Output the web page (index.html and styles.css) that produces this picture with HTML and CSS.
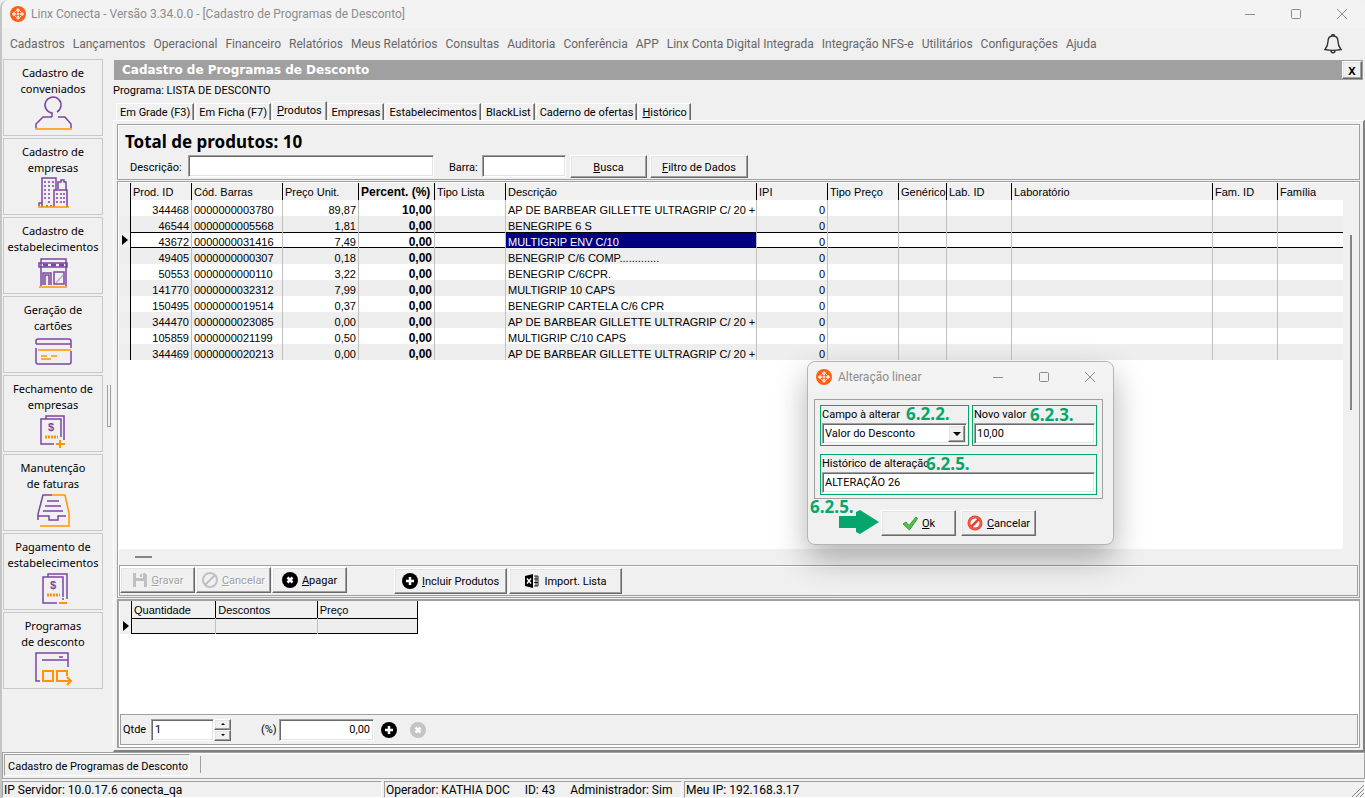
FILE: index.html
```html
<!DOCTYPE html>
<html lang="pt-BR">
<head>
  <meta charset="UTF-8">
  <meta name="viewport" content="width=device-width, initial-scale=1">
  <title>Linx Conecta</title>
  <link rel="stylesheet" href="styles.css">
</head>
<body>

<!-- shared icons -->
<svg class="sprite" aria-hidden="true">
  <symbol id="logo" viewBox="0 0 16 16">
    <circle cx="8" cy="8" r="8" fill="#fb6016"/>
    <g fill="#ffb48c" stroke="#fff" stroke-width="1">
      <circle cx="8" cy="4.3" r="1.3"/><circle cx="8" cy="11.7" r="1.3"/>
      <circle cx="4" cy="8" r="1.3"/><circle cx="12" cy="8" r="1.3"/><circle cx="8" cy="8" r="1"/>
    </g>
    <path d="M5 6l1.200-1M11 6L9.800 5M5 10l1.200 1M11 10l-1.200 1" stroke="#fff" stroke-width="1"/>
  </symbol>
  <symbol id="min" viewBox="0 0 12 12"><path d="M1 6.500h10" stroke="#8c8c8c" fill="none"/></symbol>
  <symbol id="max" viewBox="0 0 12 12"><rect x="1.500" y="1.500" width="9" height="9" rx="1" stroke="#8c8c8c" fill="none"/></symbol>
  <symbol id="close" viewBox="0 0 12 12"><path d="M1 1l10 10M11 1L1 11" stroke="#8c8c8c" fill="none"/></symbol>
  <symbol id="plus" viewBox="0 0 16 16">
    <circle cx="8" cy="8" r="8"/><path d="M8 4v8M4 8h8" stroke="#fff" stroke-width="2.500"/>
  </symbol>
  <symbol id="cross" viewBox="0 0 16 16">
    <circle cx="8" cy="8" r="8"/><path d="M5.500 5.500l5 5M10.500 5.500l-5 5" stroke="#fff" stroke-width="2.500"/>
  </symbol>
</svg>

<header class="titlebar">
  <svg class="logo"><use href="#logo"/></svg>
  <h1>Linx Conecta - Versão 3.34.0.0 - [Cadastro de Programas de Desconto]</h1>
  <div class="window-buttons">
    <button aria-label="Minimizar"><svg><use href="#min"/></svg></button>
    <button aria-label="Maximizar"><svg><use href="#max"/></svg></button>
    <button aria-label="Fechar"><svg><use href="#close"/></svg></button>
  </div>
</header>

<nav class="menubar">
  <a href="#">Cadastros</a>
  <a href="#">Lançamentos</a>
  <a href="#">Operacional</a>
  <a href="#">Financeiro</a>
  <a href="#">Relatórios</a>
  <a href="#">Meus Relatórios</a>
  <a href="#">Consultas</a>
  <a href="#">Auditoria</a>
  <a href="#">Conferência</a>
  <a href="#">APP</a>
  <a href="#">Linx Conta Digital Integrada</a>
  <a href="#">Integração NFS-e</a>
  <a href="#">Utilitários</a>
  <a href="#">Configurações</a>
  <a href="#">Ajuda</a>
  <button class="bell" aria-label="Notificações">
    <svg viewBox="0 0 18 20" fill="none" stroke="#333" stroke-width="1.400">
      <path d="M9 2C5.500 2 4 4.500 4 7.500c0 4-1 5.500-3 8 4 1 12 1 16 0-2-2.500-3-4-3-8C14 4.500 12.500 2 9 2z"/>
      <path d="M7.500 2a1.500 1.500 0 0 1 3 0M7 16.500c0 3 4 3 4 0"/>
    </svg>
  </button>
</nav>

<div class="workspace">
  <aside class="sidebar">
    <button>Cadastro de<br>conveniados
      <svg viewBox="0 0 38 38">
        <path class="p" d="M18 20v-4a8 8 0 1 1 5-1M18 20H9L2 27v4M24 20h7L37 27v4"/>
        <path class="o" d="M1 32h37"/>
      </svg>
    </button>
    <button>Cadastro de<br>empresas
      <svg viewBox="0 0 38 38">
        <path class="p" d="M8 31V2h14v12M24 13V6h3V4h3v2h2v8M20 31V14h13v17M5 30v-3h3"/>
        <path class="p dots" d="M11 5v20M15 5v24M19 5v8M23 17v11M27 17v11M30 17v11M12 30h6"/>
        <path class="o" d="M4 31h31"/>
      </svg>
    </button>
    <button>Cadastro de<br>estabelecimentos
      <svg viewBox="0 0 38 38">
        <path class="p" d="M7 31V4h25v27M5 8h28v4H5zM9 30V18h8v12M11 30V20h4v10M20 17h10v12H20z"/>
        <path class="p" d="M9 10h5M17 10h5M25 10h5" stroke-width="3"/>
        <path class="p" d="M22 28l7-8" stroke-opacity=".4"/>
        <path class="o" d="M5 32h28"/>
      </svg>
    </button>
    <button>Geração de<br>cartões
      <svg viewBox="0 0 38 38">
        <path class="p" d="M2 10V7q0-2 2-2h31q2 0 2 2v7M2 10h35M2 14v14q0 2 2 2h31q2 0 2-2V17"/>
        <path class="o" d="M4 16h33M7 22h6M17 22h6M7 25h10"/>
      </svg>
    </button>
    <button>Fechamento de<br>empresas
      <svg viewBox="0 0 38 38">
        <path class="p" d="M20 31H7V6h20v18M12 6V3h18v24"/>
        <text x="14" y="18">$</text>
        <path class="o bars" d="M11 24h13"/>
        <path class="o thick" d="M22 31h9M26 27v8"/>
      </svg>
    </button>
    <button>Manutenção<br>de faturas
      <svg viewBox="0 0 38 38">
        <path class="p" d="M4 28v-6L9 3h9M13 9h12M11 14h16M9 19h20M4 24h11v4h9v-4h8"/>
        <path class="o" d="M18 3h13l4 18v13H6"/>
      </svg>
    </button>
    <button>Pagamento de<br>estabelecimentos
      <svg viewBox="0 0 38 38">
        <path class="p" d="M23 32H9V6h20v20M14 6V3h19v25M29 27v2"/>
        <text x="16" y="18">$</text>
        <path class="o bars" d="M13 24h13"/>
        <path class="o thick" d="M25 32h8"/>
      </svg>
    </button>
    <button>Programas<br>de desconto
      <svg viewBox="0 0 38 38">
        <path class="p" d="M6 31H2V3h32v14M8 10h26M25 7h4"/>
        <path class="o thick" d="M9 21h10v10H9zM28 31h-5V21h10v5M28 31h9M33 27l4 4-4 4"/>
      </svg>
    </button>
  </aside>
  <div class="splitter"></div>

  <main class="main">
    <div class="mdi-title">
      <h2>Cadastro de Programas de Desconto</h2>
      <button class="btn" aria-label="Fechar tela">X</button>
    </div>
    <p class="program">Programa: LISTA DE DESCONTO</p>

    <div class="tabs" role="tablist">
      <button role="tab">Em Grade (F3)</button>
      <button role="tab">Em Ficha (F7)</button>
      <button role="tab" class="active" aria-selected="true"><u>P</u>rodutos</button>
      <button role="tab">Empresas</button>
      <button role="tab">Estabelecimentos</button>
      <button role="tab">BlackList</button>
      <button role="tab">Caderno de ofertas</button>
      <button role="tab"><u>H</u>istórico</button>
    </div>

    <div class="tab-page">
      <section class="panel search">
        <h3>Total de produtos: 10</h3>
        <div class="search-row">
          <label for="descricao">Descrição:</label>
          <input type="text" id="descricao" class="field">
          <label for="barra" class="barra-label">Barra:</label>
          <input type="text" id="barra" class="field">
          <button class="btn busca"><u>B</u>usca</button>
          <button class="btn filtro"><u>F</u>iltro de Dados</button>
        </div>
      </section>

      <section class="panel products">
        <div class="grid-area">
          <div class="grid-scroll">
            <table class="grid">
              <colgroup>
                <col class="c-ind"><col class="c-prod"><col class="c-cod"><col class="c-preco"><col class="c-preco">
                <col class="c-tipo"><col class="c-desc"><col class="c-tipo"><col class="c-tipo"><col class="c-gen">
                <col class="c-id"><col class="c-lab"><col class="c-id"><col>
              </colgroup>
              <thead>
                <tr><th></th><th>Prod. ID</th><th>Cód. Barras</th><th>Preço Unit.</th><th class="bold">Percent. (%)</th><th>Tipo Lista</th><th>Descrição</th><th>IPI</th><th>Tipo Preço</th><th>Genérico</th><th>Lab. ID</th><th>Laboratório</th><th>Fam. ID</th><th>Família</th></tr>
              </thead>
              <tbody>
                <tr><td></td><td>344468</td><td>0000000003780</td><td>89,87</td><td>10,00</td><td></td><td>AP DE BARBEAR GILLETTE ULTRAGRIP C/ 20 +</td><td>0</td><td></td><td></td><td></td><td></td><td></td><td></td></tr>
                <tr><td></td><td>46544</td><td>0000000005568</td><td>1,81</td><td>0,00</td><td></td><td>BENEGRIPE 6 S</td><td>0</td><td></td><td></td><td></td><td></td><td></td><td></td></tr>
                <tr class="current"><td><i class="pointer"></i></td><td>43672</td><td>0000000031416</td><td>7,49</td><td>0,00</td><td></td><td class="focus">MULTIGRIP ENV C/10</td><td>0</td><td></td><td></td><td></td><td></td><td></td><td></td></tr>
                <tr><td></td><td>49405</td><td>0000000000307</td><td>0,18</td><td>0,00</td><td></td><td>BENEGRIP C/6 COMP.............</td><td>0</td><td></td><td></td><td></td><td></td><td></td><td></td></tr>
                <tr><td></td><td>50553</td><td>0000000000110</td><td>3,22</td><td>0,00</td><td></td><td>BENEGRIP C/6CPR.</td><td>0</td><td></td><td></td><td></td><td></td><td></td><td></td></tr>
                <tr><td></td><td>141770</td><td>0000000032312</td><td>7,99</td><td>0,00</td><td></td><td>MULTIGRIP 10 CAPS</td><td>0</td><td></td><td></td><td></td><td></td><td></td><td></td></tr>
                <tr><td></td><td>150495</td><td>0000000019514</td><td>0,37</td><td>0,00</td><td></td><td>BENEGRIP CARTELA C/6 CPR</td><td>0</td><td></td><td></td><td></td><td></td><td></td><td></td></tr>
                <tr><td></td><td>344470</td><td>0000000023085</td><td>0,00</td><td>0,00</td><td></td><td>AP DE BARBEAR GILLETTE ULTRAGRIP C/ 20 +</td><td>0</td><td></td><td></td><td></td><td></td><td></td><td></td></tr>
                <tr><td></td><td>105859</td><td>0000000021199</td><td>0,50</td><td>0,00</td><td></td><td>MULTIGRIP C/10 CAPS</td><td>0</td><td></td><td></td><td></td><td></td><td></td><td></td></tr>
                <tr><td></td><td>344469</td><td>0000000020213</td><td>0,00</td><td>0,00</td><td></td><td>AP DE BARBEAR GILLETTE ULTRAGRIP C/ 20 +</td><td>0</td><td></td><td></td><td></td><td></td><td></td><td></td></tr>
              </tbody>
            </table>
          </div>
          <div class="vscroll"><div class="thumb"></div></div>
        </div>
        <div class="hscroll"><div class="thumb"></div></div>

        <div class="toolbar">
          <button class="btn" disabled>
            <svg viewBox="0 0 16 16"><path d="M1 1h12l2 2v12H1z" fill="#c0c0c0"/><path d="M4 1h7v5H4zM4 9h8v6H4z" fill="#f0f0f0"/><path d="M8 2h2v3H8z" fill="#c0c0c0"/></svg>
            <span><u>G</u>ravar</span>
          </button>
          <button class="btn" disabled>
            <svg viewBox="0 0 16 16" fill="none" stroke="#c0c0c0" stroke-width="2"><circle cx="8" cy="8" r="7"/><path d="M3 13L13 3"/></svg>
            <span><u>C</u>ancelar</span>
          </button>
          <button class="btn">
            <svg><use href="#cross"/></svg>
            <span><u>A</u>pagar</span>
          </button>
          <button class="btn wide first-wide">
            <svg><use href="#plus"/></svg>
            <span><u>I</u>ncluir Produtos</span>
          </button>
          <button class="btn wide">
            <svg viewBox="0 0 16 16"><path d="M1 3l8-2v14l-8-2z"/><path d="M3 5.500l4 5M7 5.500l-4 5" stroke="#fff" stroke-width="1.400"/><path d="M10 3h4v10h-4M12 3v10M10 6h4M10 9.500h4" fill="none" stroke="#222"/></svg>
            <span>Import. Lista</span>
          </button>
        </div>
      </section>

      <section class="prices">
        <div class="prices-area">
          <table class="grid small">
            <colgroup><col class="c-ind"><col class="c-qtd"><col class="c-dp"><col class="c-dp"></colgroup>
            <thead><tr><th></th><th>Quantidade</th><th>Descontos</th><th>Preço</th></tr></thead>
            <tbody><tr class="current"><td><i class="pointer"></i></td><td></td><td></td><td></td></tr></tbody>
          </table>
        </div>
        <div class="qty-bar">
          <label for="qtde">Qtde</label>
          <input type="text" id="qtde" class="field" value="1">
          <div class="spin">
            <button class="btn" aria-label="Aumentar"><i class="up"></i></button>
            <button class="btn" aria-label="Diminuir"><i class="down"></i></button>
          </div>
          <label for="perc" class="perc-label">(%)</label>
          <input type="text" id="perc" class="field" value="0,00">
          <button class="round" aria-label="Adicionar"><svg><use href="#plus"/></svg></button>
          <button class="round off" aria-label="Remover" disabled><svg><use href="#cross"/></svg></button>
        </div>
      </section>
    </div>
  </main>
</div>

<div class="taskbar">
  <button>Cadastro de Programas de Desconto</button>
  <span class="sep"></span>
</div>

<footer class="statusbar">
  <div class="server">IP Servidor: 10.0.17.6 conecta_qa</div>
  <div class="operator"><span>Operador: KATHIA DOC</span><span>ID: 43</span><span>Administrador: Sim</span></div>
  <div class="ip">Meu IP: 192.168.3.17
    <svg class="grip" viewBox="0 0 12 12"><path d="M0 12L12 0M4 12l8-8M8 12l4-4" stroke="#888" fill="none"/></svg>
  </div>
</footer>

<div class="dialog" role="dialog" aria-labelledby="dlgTitle">
  <div class="dialog-title">
    <svg class="logo"><use href="#logo"/></svg>
    <h2 id="dlgTitle">Alteração linear</h2>
    <div class="window-buttons">
      <button aria-label="Minimizar"><svg><use href="#min"/></svg></button>
      <button aria-label="Maximizar"><svg><use href="#max"/></svg></button>
      <button aria-label="Fechar"><svg><use href="#close"/></svg></button>
    </div>
  </div>
  <div class="dialog-panel">
    <div class="box campo">
      <label for="campo">Campo à alterar</label>
      <div class="combo field">
        <select id="campo"><option>Valor do Desconto</option></select>
        <span class="btn arrow"><i class="down"></i></span>
      </div>
      <b class="mark mark-campo">6.2.2.</b>
    </div>
    <div class="box valor">
      <label for="valor">Novo valor</label>
      <input type="text" id="valor" class="field" value="10,00">
      <b class="mark mark-valor">6.2.3.</b>
    </div>
    <div class="box historico">
      <label for="hist">Histórico de alteração</label>
      <input type="text" id="hist" class="field" value="ALTERAÇÃO 26">
      <b class="mark mark-hist">6.2.5.</b>
    </div>
  </div>
  <div class="dialog-buttons">
    <button class="btn">
      <svg viewBox="0 0 16 16"><path d="M1 9l3-2 3 3.500L14 2l1.500 1.500L7.500 15z" fill="#54c44a" stroke="#1f8a24" stroke-width=".8"/></svg>
      <span><u>O</u>k</span>
    </button>
    <button class="btn">
      <svg viewBox="0 0 16 16"><circle cx="8" cy="8" r="7.500" fill="#e8432f"/><circle cx="8" cy="8" r="4.500" fill="#fff"/><path d="M4 12l8-8" stroke="#e8432f" stroke-width="2.500"/><circle cx="8" cy="8" r="6" fill="none" stroke="#f58a78" stroke-width=".6"/></svg>
      <span><u>C</u>ancelar</span>
    </button>
  </div>
  <b class="mark mark-ok">6.2.5.</b>
  <svg class="mark-arrow" viewBox="0 0 40 24"><path d="M0 6h17V2L21 0 40 12 21 24l-4-2v-4H0z" fill="#05a66b"/></svg>
</div>

</body>
</html>
```

FILE: styles.css
```css
* {
  margin: 0; padding: 0; box-sizing: border-box;
}
body {
  font-family: Roboto, "Liberation Sans", sans-serif;
  font-size: 11px;
  color: #000;
  background: #f0f0f0;
  min-height: 100vh;
  display: flex;
  flex-direction: column;
  border-left: 2px solid #c4c4c4;
  border-radius: 8px 8px 0 0;
}
button, input, select {
  font: inherit;
  color: inherit;
}
button {
  background: none;
  border: none;
  white-space: nowrap;
}
.sprite {
  position: absolute;
  width: 0; height: 0;
}

/* Title and menu */
.titlebar {
  height: 28px;
  background: #f3f3f3;
  display: flex;
  align-items: center;
  padding: 0 17px 0 8px;
  gap: 5px;
  border-radius: 8px 8px 0 0;
}
.titlebar h1, .dialog-title h2 {
  font-size: 12px;
  font-weight: normal;
  color: #8c8c8c;
}
.logo {
  width: 16px; height: 16px;
}
.window-buttons {
  margin-left: auto;
  display: flex;
  gap: 34px;
}
.window-buttons button, .window-buttons svg {
  display: block;
  width: 12px; height: 12px;
}
.menubar {
  height: 31px;
  display: flex;
  align-items: center;
  gap: 8px;
  padding: 0 22px 0 8px;
  font-size: 12px;
}
.menubar a {
  color: #666;
  text-decoration: none;
  white-space: nowrap;
}
.bell {
  margin-left: auto;
}
.bell svg {
  display: block;
  width: 20px; height: 20px;
}

/* Left shortcuts */
.workspace {
  flex: 1;
  display: flex;
}
.sidebar {
  padding-left: 1px;
  display: flex;
  flex-direction: column;
  gap: 2px;
}
.sidebar button {
  width: 100px;
  height: 77px;
  border: 1px solid #c8c8c8;
  padding-top: 5px;
  font: 11px/16px "Noto Sans", sans-serif;
  display: block;
}
.sidebar svg {
  display: block;
  width: 38px; height: 38px;
  margin: 0 auto;
  overflow: visible;
  fill: none;
  stroke-width: 1.5;
}
.sidebar .p { stroke: #7b45a1; }
.sidebar .o { stroke: #ff9400; }
.sidebar .thick { stroke-width: 2; }
.sidebar .dots { stroke-dasharray: 2 2; }
.sidebar .bars { stroke-width: 3; stroke-dasharray: 2 1; }
.sidebar text {
  fill: #7b45a1;
  font: bold 11px "Liberation Sans", sans-serif;
}
.splitter {
  width: 4px;
  height: 42px;
  margin: 0 3px 0 4px;
  align-self: center;
  border: 1px solid #a0a0a0;
  border-top: none;
}

/* Main window */
.main {
  flex: 1;
  min-width: 0;
  padding-top: 1px;
  margin-left: -1px;
  display: flex;
  flex-direction: column;
}
.mdi-title {
  height: 20px;
  margin: 0 2px 0 1px;
  background: #a0a0a0;
  display: flex;
  align-items: center;
  justify-content: space-between;
  padding: 0 1px 0 8px;
}
.mdi-title h2 {
  font: bold 12px "DejaVu Sans", sans-serif;
  color: #fff;
}
.mdi-title .btn {
  width: 20px; height: 18px;
  font: bold 11px "Noto Sans", sans-serif;
}
.program {
  height: 21px;
  line-height: 22px;
}
.btn {
  background: #f0f0f0;
  border: 1px solid;
  border-color: #fff #696969 #696969 #fff;
  box-shadow: inset -1px -1px #a0a0a0, inset 1px 1px #e3e3e3;
}
.field {
  background: #fff;
  border: 1px solid;
  border-color: #a0a0a0 #fff #fff #a0a0a0;
  box-shadow: inset 1px 1px #696969, inset -1px -1px #e3e3e3;
  padding: 0 3px;
  outline: none;
}
.tabs {
  display: flex;
  align-items: flex-end;
  padding-left: 3px;
  gap: 1px;
  height: 19px;
}
.tabs button {
  height: 17px;
  padding: 0 3px;
  border-left: 1px solid #fff;
  border-top: 1px solid #fff;
  border-right: 1px solid #696969;
  box-shadow: inset -1px 0 #a0a0a0;
}
.tabs .active {
  height: 20px;
  padding: 0 4px 3px;
  background: #f0f0f0;
  margin-bottom: -1px;
}
.tab-page {
  flex: 1;
  display: flex;
  flex-direction: column;
  gap: 1px;
  border: 1px solid #fff;
  border-right: 2px solid #808080;
  border-bottom: 2px solid #808080;
  padding: 3px 3px 2px;
}
.panel {
  border: 1px solid #a0a0a0;
  padding: 1px;
  box-shadow: inset 1px 1px #fff;
}
.search {
  height: 56px;
  padding: 7px 7px 0;
}
.search h3 {
  font: bold 17px/20px "Noto Sans", sans-serif;
}
.search-row {
  display: flex;
  align-items: center;
  height: 28px;
  padding-left: 5px;
}
.search-row label { width: 58px; padding-top: 3px; }
.search-row .barra-label { width: 33px; margin-left: 15px; }
.search-row .field { height: 22px; }
.search-row .btn { height: 23px; padding-top: 2px; }
#descricao { width: 246px; }
#barra { width: 84px; }
.busca { width: 77px; margin-left: 4px; }
.filtro { width: 98px; margin-left: 3px; }

/* Product grid */
.products {
  flex: 1;
  display: flex;
  flex-direction: column;
}
.grid-area {
  flex: 1;
  display: flex;
}
.grid-scroll {
  flex: 1;
  min-width: 0;
  background: #fff;
}
.grid {
  width: 100%;
  table-layout: fixed;
  border-spacing: 0;
  font-family: "Liberation Sans", sans-serif;
}
.c-ind { width: 11px; }
.c-prod { width: 61px; }
.c-cod { width: 91px; }
.c-preco { width: 76px; }
.c-tipo { width: 71px; }
.c-desc { width: 251px; }
.c-gen { width: 48px; }
.c-id { width: 65px; }
.c-lab { width: 201px; }
.grid th {
  height: 17px;
  background: #f0f0f0;
  border-left: 1px solid #000;
  font-weight: normal;
  text-align: left;
  padding-left: 2px;
  line-height: 16px;
  white-space: nowrap;
}
.grid .bold, .grid td:nth-child(5) {
  font-weight: bold;
  font-size: 12px;
}
.grid td {
  height: 16px;
  line-height: 12px;
  border-left: 1px solid #c0c0c0;
  padding: 4px 2px 0;
  white-space: nowrap;
}
.grid tbody tr:nth-child(even) td { background: #eee; }
.grid td:nth-child(2) { border-left-color: #000; }
.grid td:nth-child(2), .grid td:nth-child(4), .grid td:nth-child(5), .grid td:nth-child(8) {
  text-align: right;
}
.grid .current td {
  box-shadow: inset 0 1px #000, inset 0 -1px #000;
}
.grid th:first-child, .grid tbody td:first-child {
  border: none;
  padding: 0;
  background: #f0f0f0;
  box-shadow: none;
}
.grid .current .focus {
  background: #000080;
  color: #fff;
}
.pointer {
  display: block;
  width: 6px;
  margin-left: 3px;
  border: 5px solid transparent;
  border-left: 6px solid #000;
  border-right: none;
}
.vscroll {
  width: 15px;
  padding: 52px 6px 0 7px;
}
.vscroll .thumb {
  height: 175px;
  background: #858585;
}
.hscroll {
  height: 16px;
  padding: 7px 16px;
}
.hscroll .thumb {
  width: 17px;
  height: 2px;
  background: #858585;
}
.toolbar {
  height: 31px;
  border: 1px solid #a0a0a0;
  box-shadow: inset 1px 1px #fff;
  padding: 1px 0;
  display: flex;
  gap: 1px;
}
.toolbar .btn, .dialog-buttons .btn {
  width: 75px;
  height: 26px;
  display: flex;
  align-items: center;
  justify-content: center;
  gap: 4px;
}
.toolbar .wide { width: 113px; margin-top: 1px; }
.toolbar .first-wide { margin-left: 46px; margin-right: 1px; }
.toolbar svg, .dialog-buttons svg {
  width: 16px; height: 16px;
}
.toolbar .btn:disabled {
  color: #a0a0a0;
  text-shadow: 1px 1px #fff;
}

/* Quantity discounts */
.prices {
  height: 149px;
  background: #fff;
  border: 1px solid #a0a0a0;
  border-top-width: 2px;
  border-left-width: 2px;
  padding: 0 1px 2px;
  display: flex;
  flex-direction: column;
}
.prices-area { flex: 1; }
.small { width: 298px; }
.c-qtd { width: 84px; }
.c-dp { width: 101px; }
.small .current td { background: #eee; }
.small th:last-child, .small td:last-child { border-right: 1px solid #000; }
.qty-bar {
  height: 31px;
  background: #f0f0f0;
  border: 1px solid #a0a0a0;
  display: flex;
  align-items: center;
  padding-left: 2px;
}
.qty-bar label { width: 28px; }
.qty-bar .field { height: 22px; }
#qtde { width: 63px; }
.spin .btn {
  width: 17px; height: 11px;
  display: flex;
  align-items: center;
  justify-content: center;
}
.up, .down {
  border: 2px solid transparent;
}
.up { border-top: none; border-bottom-color: #000; }
.down { border-bottom: none; border-top-color: #000; }
.qty-bar .perc-label { width: 18px; margin-left: 30px; }
#perc { width: 95px; text-align: right; }
.round {
  margin-left: 7px;
  width: 16px; height: 16px;
}
.round svg {
  display: block;
  width: 16px; height: 16px;
}
.off { margin-left: 13px; }
.off svg { fill: #c4c4c4; }

/* Bottom bars */
.taskbar {
  height: 27px;
  border: 1px solid #a0a0a0;
  box-shadow: inset 0 1px #fff;
  padding: 1px;
  display: flex;
  gap: 10px;
}
.taskbar button {
  height: 22px;
  padding: 3px 1px 0 3px;
  border: 1px solid;
  border-color: #a0a0a0 #fff #fff #a0a0a0;
}
.sep {
  width: 1px;
  height: 17px;
  margin-top: 2px;
  background: #a0a0a0;
}
.statusbar {
  height: 19px;
  padding-top: 2px;
  display: flex;
  gap: 2px;
  font-size: 12px;
  line-height: 16px;
}
.statusbar > div {
  border: 1px solid;
  border-color: #a0a0a0 #fff #fff #a0a0a0;
  padding-left: 1px;
  white-space: nowrap;
}
.server { width: 380px; }
.operator {
  width: 298px;
  display: flex;
  gap: 15px;
}
.ip {
  flex: 1;
  display: flex;
  justify-content: space-between;
}
.grip {
  width: 12px; height: 12px;
  align-self: flex-end;
}

/* Dialog */
.dialog {
  position: absolute;
  left: 807px;
  top: 361px;
  width: 307px;
  background: #f0f0f0;
  border: 1px solid #b4b4b4;
  border-radius: 8px;
  box-shadow: 0 14px 32px rgba(0, 0, 0, 0.3);
  padding-bottom: 8px;
}
.dialog-title {
  height: 30px;
  background: #f3f3f3;
  border-radius: 8px 8px 0 0;
  display: flex;
  align-items: center;
  gap: 6px;
  padding: 0 17px 0 8px;
}
.dialog-panel {
  margin: 7px 10px 0 6px;
  border: 1px solid #a0a0a0;
  padding: 5px 5px 3px;
  display: grid;
  grid-template-columns: 149px 1fr;
  gap: 8px 3px;
}
.box {
  position: relative;
  height: 41px;
  border: 1px solid #05a66b;
  padding: 1px;
}
.box label {
  display: block;
  height: 16px;
  line-height: 15px;
}
.box input, .combo {
  display: flex;
  width: 100%;
  height: 21px;
  padding-left: 2px;
}
.combo { padding: 1px 0 1px 2px; }
.combo select {
  flex: 1;
  min-width: 0;
  appearance: none;
  border: none;
  background: none;
  outline: none;
}
.arrow {
  width: 17px;
  margin-right: 1px;
  display: flex;
  align-items: center;
  justify-content: center;
  pointer-events: none;
}
.arrow .down { border-width: 4px 4px 0; }
.historico { grid-column: span 2; }
.dialog-buttons {
  display: flex;
  gap: 5px;
  margin: 11px 0 0 73px;
}
.mark {
  position: absolute;
  font: bold 17px/18px "Open Sans", sans-serif;
  color: #05a66b;
}
.mark-campo { left: 85px; top: -1px; }
.mark-valor { left: 57px; top: 0; }
.mark-hist { left: 105px; top: 0; }
.mark-ok { left: 2px; top: 136px; }
.mark-arrow {
  position: absolute;
  left: 31px;
  top: 148px;
  width: 40px;
  height: 24px;
}
```
